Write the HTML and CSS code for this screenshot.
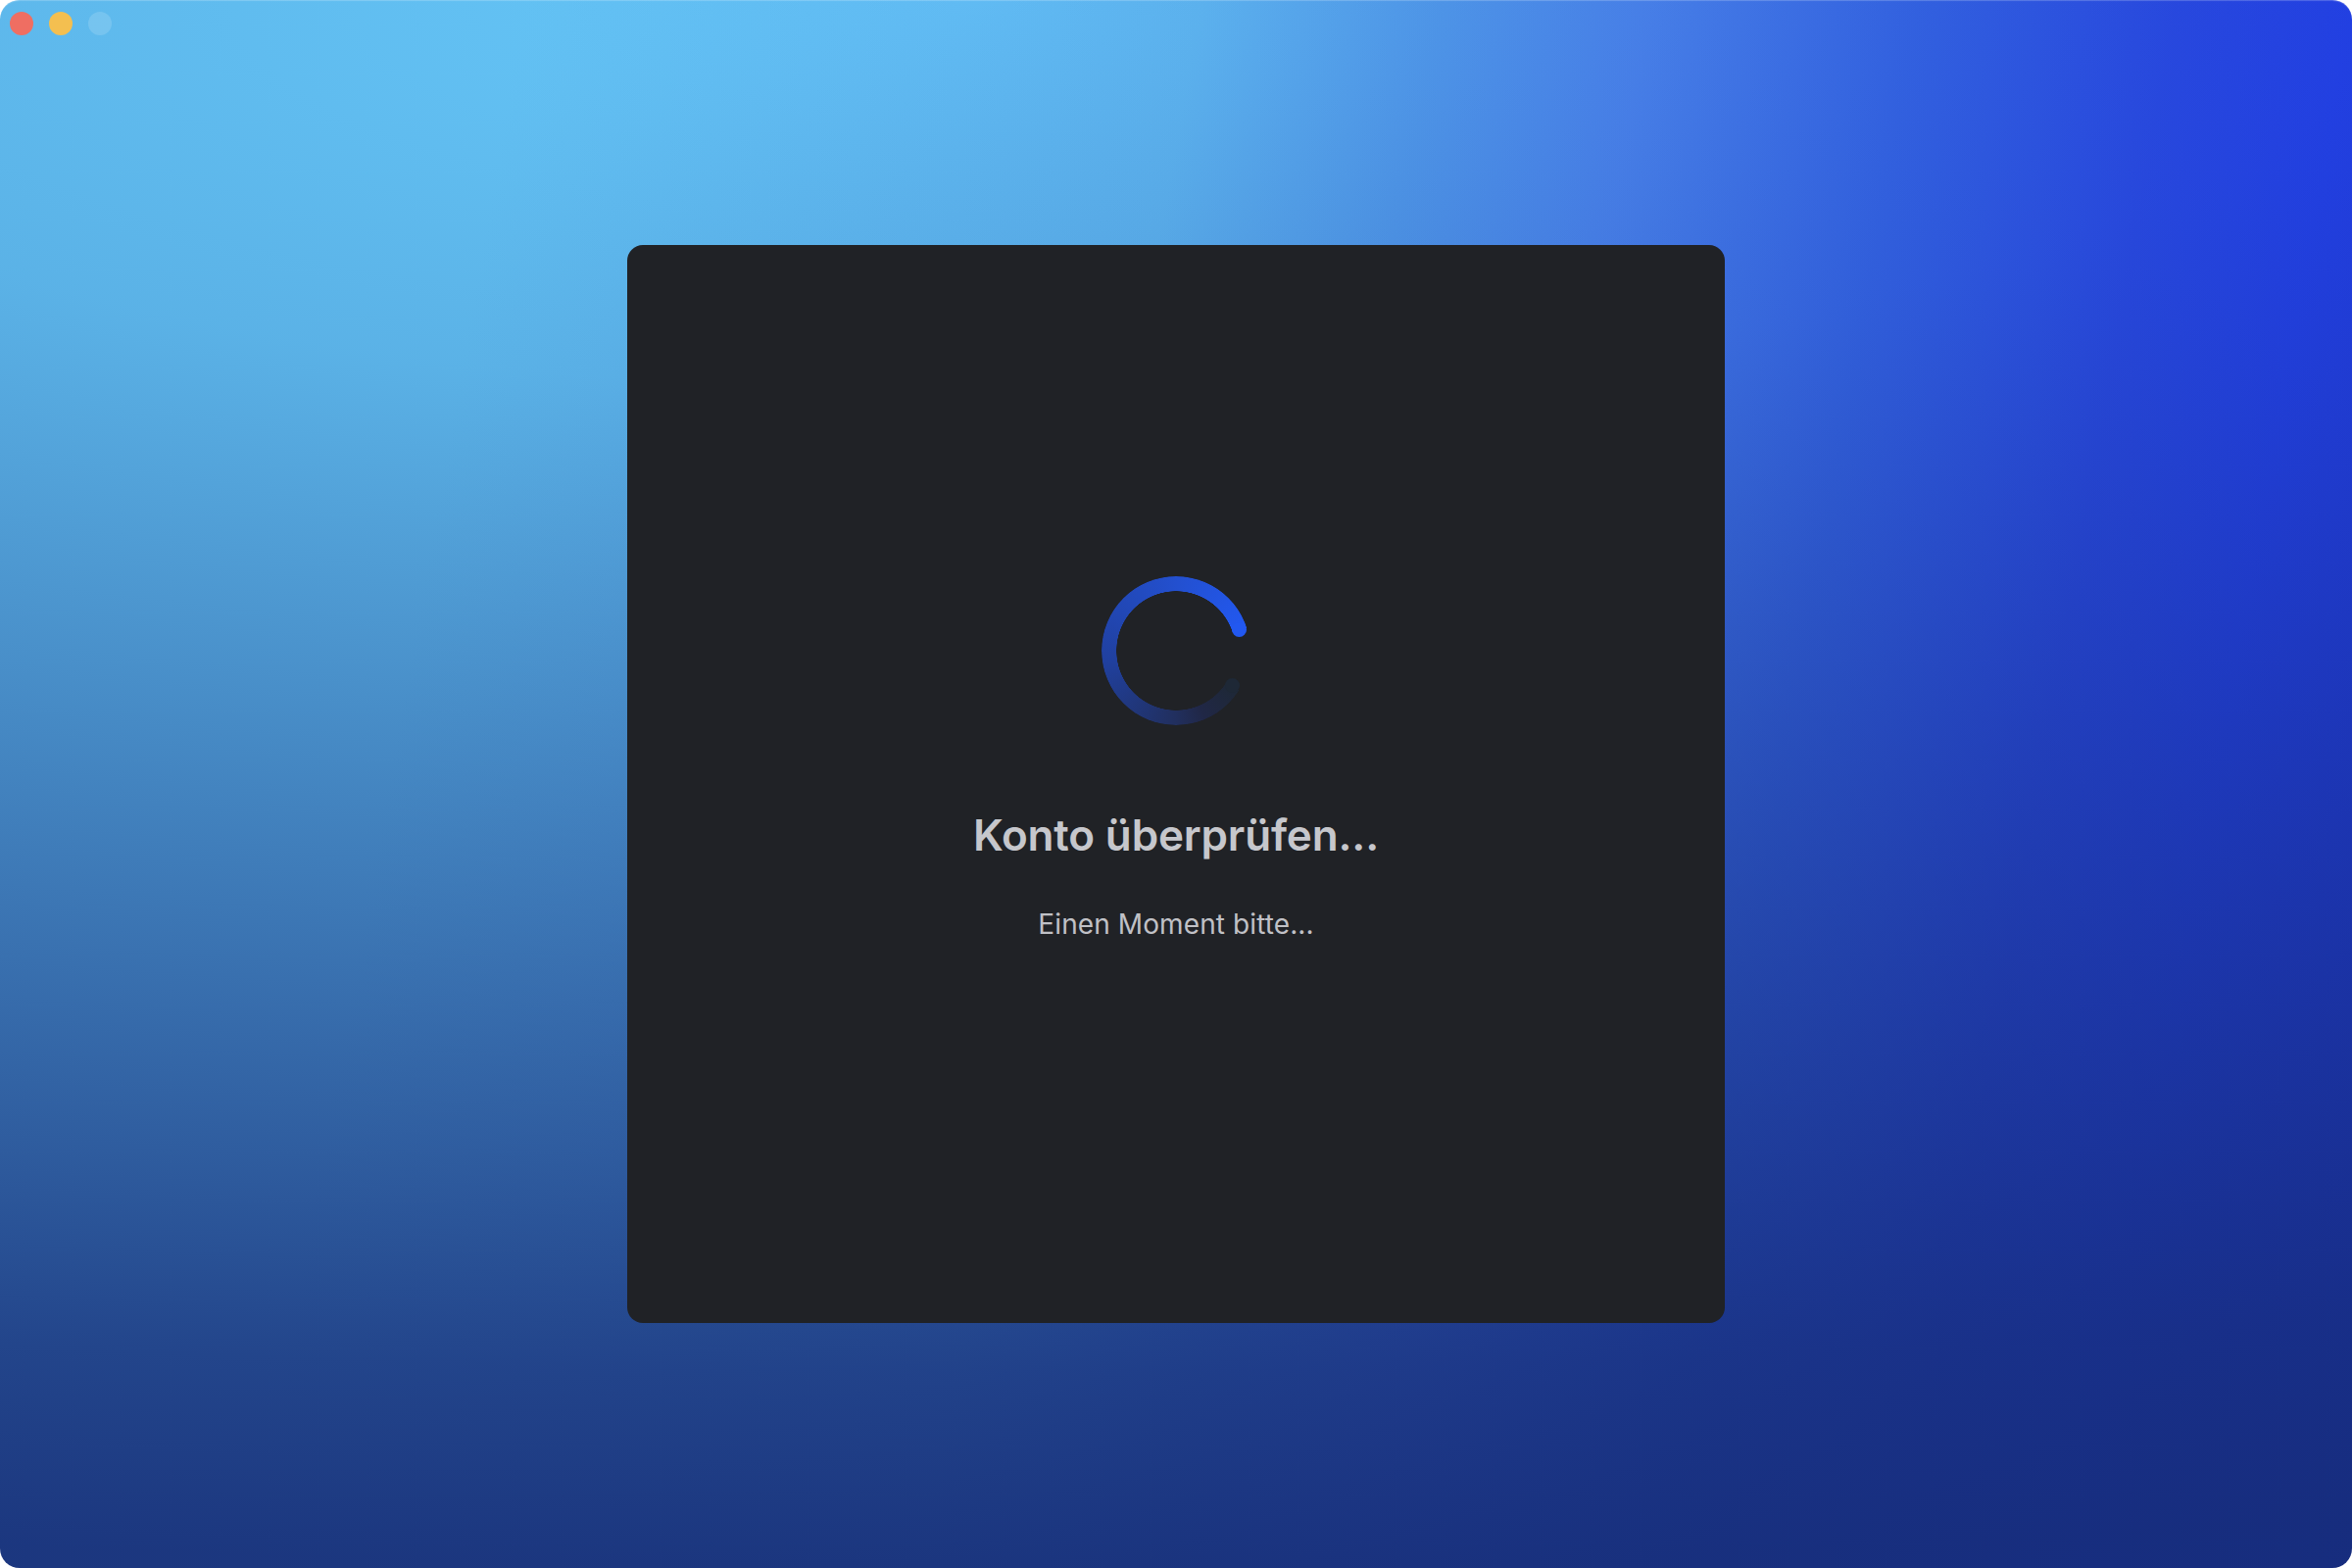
FILE: index.html
```html
<!DOCTYPE html>
<html lang="de">
<head>
<meta charset="utf-8">
<title>Konto überprüfen</title>
<link rel="stylesheet" href="styles.css">
</head>
<body>
<div class="window">
  <div class="traffic">
    <span class="dot dot-red"></span>
    <span class="dot dot-yellow"></span>
    <span class="dot dot-idle"></span>
  </div>
  <main class="card">
    <div class="spinner"><span class="ring"></span><span class="cap"></span><span class="cap-tail"></span></div>
    <h1 class="title">Konto überprüfen...</h1>
    <p class="subtitle">Einen Moment bitte...</p>
  </main>
</div>
</body>
</html>
```
FILE: styles.css
```css
* { box-sizing: border-box; }
html, body { margin: 0; padding: 0; background: #fff; }
body { width: 2400px; height: 1600px; font-family: Inter, "Liberation Sans", sans-serif; overflow: hidden; }
.window {
  position: relative;
  width: 2400px;
  height: 1600px;
  border-radius: 20px;
  overflow: hidden;
  display: flex;
  align-items: center;
  justify-content: center;
  box-shadow: inset 0 2px 1px -1px rgba(255,255,255,.22);
  background:
    radial-gradient(ellipse 5600px 1600px at 1000px 0,
      rgba(22,44,118,0) 0%,
      rgba(22,44,118,.14) 25%,
      rgba(22,44,118,.41) 50%,
      rgba(22,44,118,.69) 75%,
      rgba(22,44,118,.84) 87.5%,
      rgba(22,44,118,.93) 100%),
    linear-gradient(100deg,
      #66c8f9 0%, #66c8f9 20%,
      #5db4f0 45.7%, #5099ec 54.8%,
      #4a84ef 62.8%, #3566ea 73%,
      #2a4cec 82.8%, #2443f3 89.5%, #2038e6 100%);
}
.traffic { position: absolute; top: 12px; left: 10px; display: flex; gap: 16px; }
.dot { width: 24px; height: 24px; border-radius: 50%; }
.dot-red { background: #ef6e62; }
.dot-yellow { background: #f4bf50; }
.dot-idle { background: rgba(255,255,255,.15); }
.card {
  width: 1120px;
  height: 1100px;
  background: #202226;
  border-radius: 16px;
  display: flex;
  flex-direction: column;
  align-items: center;
  padding-top: 334px;
}
.spinner { position: relative; width: 160px; height: 160px; }
.ring {
  display: block;
  width: 152px;
  height: 152px;
  margin: 4px;
  border-radius: 50%;
  background: conic-gradient(from 122deg, #1e2836 0deg, #202746 35deg, #212f5e 58deg, #20409f 140deg, #2350d0 240deg, #2258f0 310deg, transparent 310deg);
  -webkit-mask: radial-gradient(circle, transparent 60.5px, #000 61px);
  mask: radial-gradient(circle, transparent 60.5px, #000 61px);
}
.cap {
  position: absolute;
  left: 137px;
  top: 51px;
  width: 15px;
  height: 15px;
  border-radius: 50%;
  background: #2258f0;
}
.cap-tail {
  position: absolute;
  left: 130px;
  top: 108px;
  width: 15px;
  height: 15px;
  border-radius: 50%;
  background: #1e2836;
}
.title { margin: 80px 0 0; font-size: 44px; line-height: 56px; font-weight: 600; letter-spacing: -0.16px; color: #c6c7cc; }
.subtitle { margin: 45px 0 0; font-size: 28px; line-height: 36px; font-weight: 400; letter-spacing: 0.1px; color: #c0c1c6; }
```
